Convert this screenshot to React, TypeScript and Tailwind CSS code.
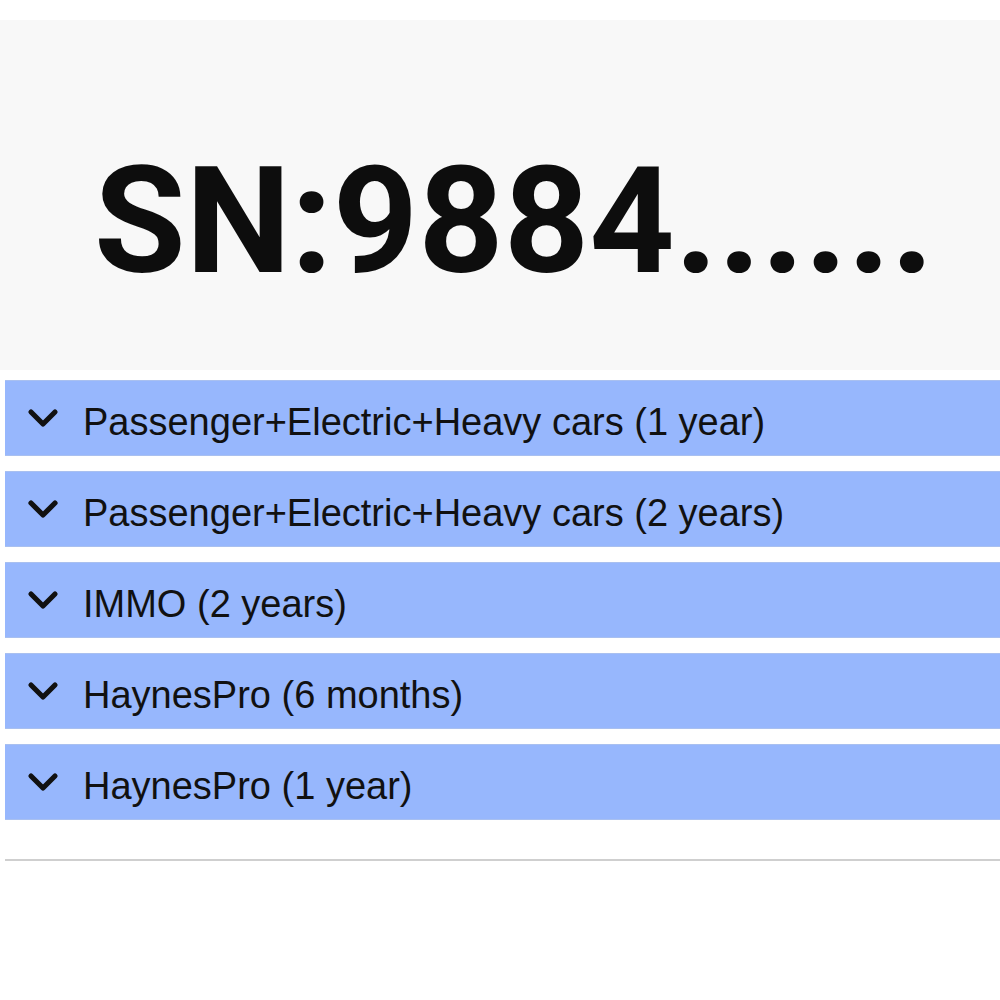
import { ChevronDown } from 'lucide-react';

const items = [
  'Passenger+Electric+Heavy cars (1 year)',
  'Passenger+Electric+Heavy cars (2 years)',
  'IMMO (2 years)',
  'HaynesPro (6 months)',
  'HaynesPro (1 year)',
];

export default function App() {
  return (
    <div className="w-[1000px] h-[1000px] bg-white overflow-hidden">
      <div className="h-5" />
      {/* header */}
      <div className="h-[350px] bg-[#f8f8f8] flex items-center justify-center">
        <h1 className="text-[149px] leading-none font-bold text-[#0d0d0d] font-['Roboto',sans-serif] pl-[28px] pt-[52px]">
          SN:9884......
        </h1>
      </div>

      {/* list */}
      <div className="pl-[5px] pt-[10px] flex flex-col gap-[15px]">
        {items.map((label) => (
          <div
            key={label}
            className="h-[76px] bg-[#97b7fd] border-t border-b border-[#a9c0f0] flex items-center font-['Liberation_Sans',Arial,sans-serif]"
          >
            <ChevronDown className="ml-[14px] w-[48px] h-[48px] text-[#111]" strokeWidth={2.6} />
            <span className="ml-[16px] pt-[8px] text-[38px] text-[#111]">{label}</span>
          </div>
        ))}
      </div>

      <div className="ml-[5px] mt-[39px] border-t-2 border-[#cfcfcf]" />
    </div>
  );
}
